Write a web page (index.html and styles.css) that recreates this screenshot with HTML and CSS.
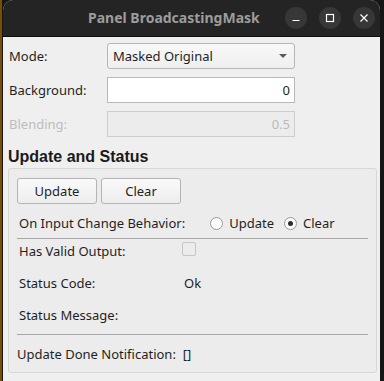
FILE: index.html
```html
<!DOCTYPE html>
<html lang="en">
<head>
    <meta charset="UTF-8">
    <title>Panel BroadcastingMask</title>
    <link rel="stylesheet" href="styles.css">
</head>
<body>
    <div class="window">
        <div class="titlebar">
            <span class="title">Panel BroadcastingMask</span>
            <div class="controls">
                <span class="ctl">
                    <svg width="10" height="10" viewBox="0 0 10 10"><path d="M1.5 7.5h7" stroke="#fff" stroke-width="1.2"/></svg>
                </span>
                <span class="ctl">
                    <svg width="10" height="10" viewBox="0 0 10 10"><rect x="1.5" y="1.5" width="7" height="7" fill="none" stroke="#fff" stroke-width="1.2"/></svg>
                </span>
                <span class="ctl">
                    <svg width="10" height="10" viewBox="0 0 10 10"><path d="M1.5 1.5l7 7M8.5 1.5l-7 7" stroke="#fff" stroke-width="1.2"/></svg>
                </span>
            </div>
        </div>

        <div class="content">
            <div class="form">
                <label class="form-label">Mode:</label>
                <div class="combo">
                    <span>Masked Original</span>
                    <span class="arrow"></span>
                </div>

                <label class="form-label">Background:</label>
                <div class="field">0</div>

                <label class="form-label disabled">Blending:</label>
                <div class="field field-disabled">0.5</div>
            </div>

            <h2 class="section-title">Update and Status</h2>

            <div class="group">
                <div class="buttons">
                    <button class="btn">Update</button>
                    <button class="btn">Clear</button>
                </div>

                <div class="row radio-row">
                    <span class="row-label">On Input Change Behavior:</span>
                    <span class="radio"></span><span class="radio-text">Update</span>
                    <span class="radio checked"></span><span class="radio-text">Clear</span>
                </div>

                <div class="separator"></div>

                <div class="status">
                    <div class="row">
                        <span class="row-label col">Has Valid Output:</span>
                        <span class="checkbox"></span>
                    </div>
                    <div class="row">
                        <span class="row-label col">Status Code:</span>
                        <span class="value">Ok</span>
                    </div>
                    <div class="row">
                        <span class="row-label col">Status Message:</span>
                    </div>
                </div>

                <div class="separator sep-bottom"></div>

                <div class="row notify">
                    <span>Update Done Notification:&nbsp; []</span>
                </div>
            </div>
        </div>
    </div>
</body>
</html>
```

FILE: styles.css
```css
* {
    margin: 0;
    padding: 0;
    box-sizing: border-box;
}

body {
    width: 384px;
    height: 381px;
    overflow: hidden;
    background: linear-gradient(to right, #7a4c0a 0 2px, #161616 2px);
    font-family: 'Noto Sans', 'Open Sans', sans-serif;
    font-size: 13px;
    color: #1f1f1f;
}

.window {
    margin-left: 3px;
    width: 377px;
    height: 381px;
    background: #efefef;
    border-radius: 10px 10px 0 0;
    overflow: hidden;
}

/* title bar */
.titlebar {
    height: 37px;
    background: #242424;
    border-bottom: 1px solid #0c0c0c;
    display: flex;
    align-items: center;
}

.title {
    flex: 1;
    padding-left: 85px;
    font-weight: 700;
    font-size: 14px;
    color: #9c9c9c;
    padding-bottom: 1px;
}

.controls {
    display: flex;
    gap: 12px;
    margin-right: 5px;
}

.ctl {
    width: 22px;
    height: 22px;
    border-radius: 50%;
    background: #373737;
    display: flex;
    align-items: center;
    justify-content: center;
}

.content {
    padding: 6px 0 0 5px;
}

/* form */
.form {
    display: grid;
    grid-template-columns: 99px 188px;
    grid-auto-rows: 26px;
    row-gap: 8px;
    align-items: center;
}

.form-label {
    padding-left: 1px;
}

.disabled {
    color: #bdbdbd;
}

.combo {
    height: 26px;
    border: 1px solid #b6b6b6;
    border-radius: 3px;
    background: linear-gradient(#f8f8f8, #efefef);
    display: flex;
    align-items: center;
    justify-content: space-between;
    padding: 0 7px 0 5px;
}

.arrow {
    width: 0;
    height: 0;
    border-left: 4px solid transparent;
    border-right: 4px solid transparent;
    border-top: 4px solid #5a5a5a;
}

.field {
    height: 26px;
    border: 1px solid #b9b9b9;
    background: #fff;
    text-align: right;
    padding-right: 4px;
    line-height: 24px;
}

.field-disabled {
    background: #ececec;
    border-color: #cdcdcd;
    color: #bababa;
}

.section-title {
    font-family: 'Liberation Sans', Arial, sans-serif;
    font-size: 16px;
    font-weight: 700;
    color: #1a1a1a;
    margin: 9px 0 0 0;
    line-height: 22px;
}

/* group box */
.group {
    margin: 0 3px 0 0;
    border: 1px solid #d7d7d7;
    border-radius: 3px;
    background: #ececec;
    padding: 9px 8px 7px 8px;
    height: 205px;
}

.buttons {
    display: flex;
    gap: 4px;
}

.btn {
    width: 80px;
    height: 26px;
    border: 1px solid #b4b4b4;
    border-radius: 3px;
    background: linear-gradient(#f9f9f9, #ededed);
    font-family: inherit;
    font-size: 13px;
    color: #1f1f1f;
}

.row {
    display: flex;
    align-items: center;
    height: 24px;
    padding-left: 2px;
}

.radio-row {
    margin-top: 7px;
}

.row-label.col {
    width: 163px;
}

.radio {
    width: 13px;
    height: 13px;
    border: 1px solid #9a9a9a;
    border-radius: 50%;
    background: #fbfbfb;
    margin: 0 6px 0 25px;
    display: inline-flex;
    align-items: center;
    justify-content: center;
}

.radio.checked {
    margin-left: 10px;
}

.radio.checked::after {
    content: "";
    width: 5px;
    height: 5px;
    border-radius: 50%;
    background: #2b2b2b;
}

.separator {
    height: 1px;
    background: #a8a8a8;
    margin: 3px 0 0 0;
}

.status {
    display: flex;
    flex-direction: column;
    gap: 8px;
}

.checkbox {
    width: 14px;
    height: 14px;
    border: 1px solid #c6c6c6;
    border-radius: 2px;
    background: #ececec;
    margin-top: -4px;
}

.value {
    margin-left: 2px;
}

.sep-bottom {
    margin-top: 7px;
}

.notify {
    margin-top: 7px;
    padding-left: 0;
}
```
